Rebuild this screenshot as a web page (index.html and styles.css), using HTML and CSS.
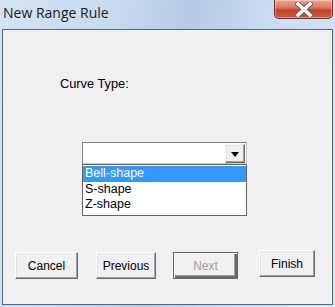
FILE: index.html
```html
<!DOCTYPE html>
<html lang="en">
<head>
  <meta charset="UTF-8" />
  <title>New Range Rule</title>
  <link rel="stylesheet" href="styles.css">
</head>
<body>
  <div class="window">
    <div class="titlebar">
      <span class="title">New Range Rule</span>
      <button class="close" aria-label="Close">
        <svg width="18" height="15" viewBox="0 0 18 15">
          <path d="M3 2 L15 13 M15 2 L3 13" stroke="#5b5b5b" stroke-width="5.5" stroke-linecap="square" fill="none"/>
          <path d="M3 2 L15 13 M15 2 L3 13" stroke="#fff" stroke-width="3.5" stroke-linecap="square" fill="none"/>
        </svg>
      </button>
    </div>

    <div class="client">
      <div class="label">Curve Type:</div>

      <div class="combo">
        <div class="combo-field"></div>
        <div class="combo-btn">
          <svg width="8" height="5" viewBox="0 0 8 5"><path d="M0 0 H8 L4 5 Z" fill="#000"/></svg>
        </div>
        <ul class="dropdown">
          <li class="selected">Bell-shape</li>
          <li>S-shape</li>
          <li>Z-shape</li>
        </ul>
      </div>

      <div class="buttons">
        <button class="btn btn-cancel">Cancel</button>
        <button class="btn btn-prev">Previous</button>
        <button class="btn btn-next" disabled>Next</button>
        <button class="btn btn-finish">Finish</button>
      </div>
    </div>
  </div>
</body>
</html>
```

FILE: styles.css
```css
* { box-sizing: border-box; }
html, body {
  margin: 0;
  padding: 0;
}

.window {
  width: 335px;
  height: 307px;
  display: flex;
  flex-direction: column;
  background: linear-gradient(100deg, #d3e3f4 0%, #c7dbf0 30%, #b3cce6 50%, #c9dcf1 70%, #d7e6f6 100%);
  font-family: "Liberation Sans", Arial, sans-serif;
}

.titlebar {
  height: 29px;
  display: flex;
  align-items: flex-start;
}

.title {
  font-family: "Open Sans", "Noto Sans", sans-serif;
  font-size: 14px;
  color: #1b1b1b;
  padding: 3px 0 0 3px;
  line-height: 19px;
}

.close {
  margin-left: auto;
  margin-right: 2px;
  width: 59px;
  height: 19px;
  padding: 0;
  border: 1px solid #7e2b1e;
  border-top: none;
  border-radius: 0 0 5px 5px;
  background: linear-gradient(#e9a797 0%, #d9735e 45%, #c4402a 55%, #cf5a3f 100%);
  box-shadow: inset 0 0 0 1px rgba(255,255,255,0.35);
  display: flex;
  align-items: center;
  justify-content: center;
}

.client {
  flex: 1;
  margin: 0 2px 2px 2px;
  background: #f0f0f0;
  border: 1px solid #5b6573;
  display: flex;
  flex-direction: column;
}

.label {
  font-size: 12.8px;
  line-height: 15px;
  color: #000;
  margin: 46px 0 0 57px;
}

.combo {
  position: relative;
  margin: 51px 0 0 79px;
  width: 165px;
  height: 22px;
  background: #fff;
  border: 1px solid #828282;
  border-bottom-color: #c8c8c8;
  border-right-color: #c8c8c8;
  display: flex;
  padding: 1px;
}

.combo-field {
  flex: 1;
}

.combo-btn {
  width: 20px;
  height: 19px;
  background: #f0f0f0;
  border: 1px solid;
  border-color: #f8f8f8 #696969 #696969 #f8f8f8;
  box-shadow: inset -1px -1px #a0a0a0, inset 1px 1px #e3e3e3;
  display: flex;
  align-items: center;
  justify-content: center;
  padding-top: 1px;
}

.dropdown {
  position: absolute;
  left: -1px;
  top: 21px;
  width: 165px;
  margin: 0;
  padding: 1px 0 2px;
  list-style: none;
  background: #fff;
  border: 1px solid #646464;
}

.dropdown li {
  height: 15.5px;
  line-height: 15.5px;
  font-size: 12.5px;
  padding-left: 2px;
  color: #000;
}

.dropdown li.selected {
  background: #3399ff;
  color: #fff;
}

.buttons {
  margin: 86px 0 0 12px;
  display: flex;
  align-items: flex-start;
}

.btn {
  height: 27px;
  margin-top: 2px;
  padding: 0;
  font-family: "Liberation Sans", Arial, sans-serif;
  font-size: 12px;
  color: #000;
  background: #f0f0f0;
  border: 1px solid;
  border-color: #ffffff #696969 #696969 #ffffff;
  box-shadow: inset -1px -1px #a0a0a0, inset 1px 1px #e3e3e3;
}

.btn-cancel { width: 63px; }
.btn-prev { width: 60px; margin-left: 18px; }
.btn-next {
  width: 65px;
  margin-left: 17px;
  color: #a0a0a0;
  border: 1px solid #646464;
  box-shadow: inset 1px 1px #fff, inset -2px -2px #696969, inset -3px -3px #a0a0a0;
}
.btn-finish { width: 56px; margin-left: 21px; margin-top: 0; }
```
